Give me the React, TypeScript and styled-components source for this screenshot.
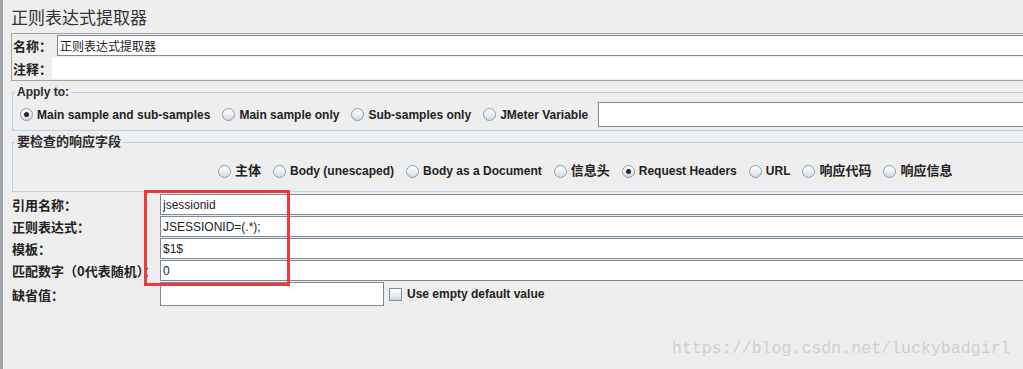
import React from "react";
import styled, { createGlobalStyle } from "styled-components";

const Global = createGlobalStyle`
  html, body {
    margin: 0;
    padding: 0;
    background: #eeeeee;
    overflow: hidden;
  }
  body {
    font-family: "Liberation Sans", "Noto Sans CJK SC", sans-serif;
    font-size: 12px;
    color: #222;
  }
`;

const Page = styled.div`
  position: relative;
  width: 1023px;
  height: 369px;
  overflow: hidden;
  box-sizing: border-box;
  background: #eeeeee;
  border-left: 3px solid #9ea4aa;
`;

const Content = styled.div`
  width: 1120px;
  padding-left: 8px;
  display: flex;
  flex-direction: column;
`;

const Title = styled.h1`
  margin: 7px 0 6px 0;
  font: 400 17px/20px "Noto Sans CJK SC", sans-serif;
  color: #333;
`;

const NamePanel = styled.div`
  border: 1px solid #a3a3a3;
  padding: 1px;
  display: flex;
  flex-direction: column;
  gap: 1px;
`;

const PanelRow = styled.div<{ $labelWidth: number; $height: number }>`
  display: grid;
  grid-template-columns: ${(p) => p.$labelWidth}px 1fr;
  align-items: center;
  height: ${(p) => p.$height}px;
`;

const Label = styled.span`
  font: 700 13px/15px "Noto Sans CJK SC", "Liberation Sans", sans-serif;
  color: #222;
  white-space: nowrap;
`;

const TextField = styled.input<{ $width?: number; $height?: number; $bordered?: boolean }>`
  box-sizing: border-box;
  width: ${(p) => (p.$width ? `${p.$width}px` : "100%")};
  height: ${(p) => p.$height ?? 21}px;
  margin: 0;
  padding: 0 2px;
  background: #ffffff;
  border: ${(p) => (p.$bordered === false ? "none" : "1px solid #7a8a99")};
  border-radius: 0;
  outline: none;
  font: 400 12px "Liberation Sans", "Noto Sans CJK SC", sans-serif;
  color: #222;
`;

const Group = styled.fieldset<{ $padTop: number; $padBottom: number }>`
  margin: 4px 0 0 1px;
  padding: ${(p) => `${p.$padTop}px 0 ${p.$padBottom}px 0`};
  border: 1px solid #b8cfe5;
  min-inline-size: 0;
`;

const Legend = styled.legend<{ $cjk?: boolean }>`
  margin-left: 2px;
  padding: 0 2px;
  font: 700 ${(p) => (p.$cjk ? 13 : 12)}px/14px "Liberation Sans", "Noto Sans CJK SC", sans-serif;
  color: #2b2b2b;
`;

const RadioRow = styled.div<{ $indent: number }>`
  display: flex;
  align-items: center;
  gap: 8px;
  padding-left: ${(p) => p.$indent}px;
`;

const RadioItem = styled.label<{ $cjk: boolean }>`
  display: inline-flex;
  align-items: center;
  gap: 4px;
  flex: none;
  padding: 0 2px;
  font: 700 ${(p) => (p.$cjk ? 13 : 12)}px/16px "Liberation Sans", "Noto Sans CJK SC", sans-serif;
  color: #222;
  white-space: nowrap;
`;

const RadioIcon = styled.span<{ $checked: boolean }>`
  position: relative;
  flex: none;
  box-sizing: border-box;
  width: 13px;
  height: 13px;
  border-radius: 50%;
  border: 1px solid #8d9cab;
  background: linear-gradient(180deg, #ffffff 0%, #eef2f6 45%, #cfd9e3 100%);
  &::after {
    content: "";
    display: ${(p) => (p.$checked ? "block" : "none")};
    position: absolute;
    left: 3px;
    top: 3px;
    width: 5px;
    height: 5px;
    border-radius: 50%;
    background: #2a2a2a;
  }
`;

const VariableField = styled(TextField)`
  flex: 1;
`;

const Form = styled.div`
  display: grid;
  grid-template-columns: 148px 1fr;
  row-gap: 1px;
  align-items: center;
  margin-top: 2px;
  padding-left: 1px;
`;

const DefaultRow = styled.div`
  display: flex;
  align-items: center;
`;

const CheckLabel = styled.label`
  display: inline-flex;
  align-items: center;
  gap: 5px;
  margin-left: 5px;
  font: 700 12px/16px "Liberation Sans", sans-serif;
  color: #222;
`;

const CheckBox = styled.span`
  box-sizing: border-box;
  width: 13px;
  height: 13px;
  border: 1px solid #7f8e9d;
  background: linear-gradient(180deg, #ffffff 0%, #e9eef3 50%, #cdd7e1 100%);
`;

const Highlight = styled.div`
  position: absolute;
  left: 141px;
  top: 190px;
  width: 146px;
  height: 96px;
  box-sizing: border-box;
  border: 3px solid #ee3a3a;
  pointer-events: none;
`;

const Watermark = styled.div`
  position: absolute;
  left: 669px;
  top: 339px;
  font: 400 16.6px/20px "Liberation Mono", monospace;
  color: #d2d0c9;
  white-space: nowrap;
  pointer-events: none;
`;

type Opt = { label: string; checked?: boolean; cjk?: boolean };

const applyOpts: Opt[] = [
  { label: "Main sample and sub-samples", checked: true },
  { label: "Main sample only" },
  { label: "Sub-samples only" },
  { label: "JMeter Variable" },
];

const fieldOpts: Opt[] = [
  { label: "主体", cjk: true },
  { label: "Body (unescaped)" },
  { label: "Body as a Document" },
  { label: "信息头", cjk: true },
  { label: "Request Headers", checked: true },
  { label: "URL" },
  { label: "响应代码", cjk: true },
  { label: "响应信息", cjk: true },
];

const Radio = ({ label, checked, cjk }: Opt) => (
  <RadioItem $cjk={!!cjk}>
    <RadioIcon $checked={!!checked} />
    {label}
  </RadioItem>
);

export default function App() {
  return (
    <>
      <Global />
      <Page>
        <Content>
          <Title>正则表达式提取器</Title>
          <NamePanel>
            <PanelRow $labelWidth={44} $height={21}>
              <Label>名称：</Label>
              <TextField defaultValue="正则表达式提取器" />
            </PanelRow>
            <PanelRow $labelWidth={39} $height={22}>
              <Label>注释：</Label>
              <TextField $height={22} $bordered={false} defaultValue="" />
            </PanelRow>
          </NamePanel>

          <Group $padTop={3} $padBottom={3}>
            <Legend>Apply to:</Legend>
            <RadioRow $indent={5}>
              {applyOpts.map((o) => (
                <Radio key={o.label} {...o} />
              ))}
              <VariableField $height={25} defaultValue="" />
            </RadioRow>
          </Group>

          <Group $padTop={14} $padBottom={12}>
            <Legend $cjk>要检查的响应字段</Legend>
            <RadioRow $indent={203}>
              {fieldOpts.map((o) => (
                <Radio key={o.label} {...o} />
              ))}
            </RadioRow>
          </Group>

          <Form>
            <Label>引用名称：</Label>
            <TextField defaultValue="jsessionid" />
            <Label>正则表达式：</Label>
            <TextField defaultValue="JSESSIONID=(.*);" />
            <Label>模板：</Label>
            <TextField defaultValue="$1$" />
            <Label>匹配数字（0代表随机）：</Label>
            <TextField defaultValue="0" />
            <Label>缺省值：</Label>
            <DefaultRow>
              <TextField $width={224} $height={24} defaultValue="" />
              <CheckLabel>
                <CheckBox />
                Use empty default value
              </CheckLabel>
            </DefaultRow>
          </Form>
        </Content>
        <Highlight />
        <Watermark>https://blog.csdn.net/luckybadgirl</Watermark>
      </Page>
    </>
  );
}
